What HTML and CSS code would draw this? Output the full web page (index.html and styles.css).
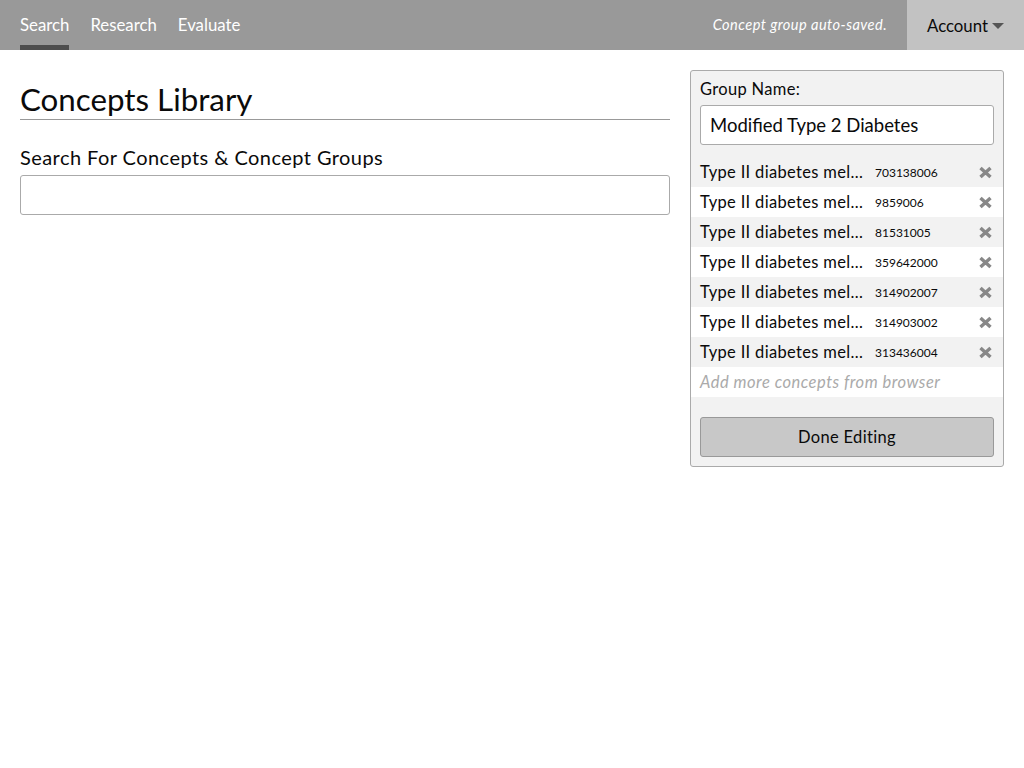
FILE: index.html
```html
<!DOCTYPE html>
<html>
<head>
<meta charset="utf-8">
<link rel="stylesheet" href="styles.css">
</head>
<body>
<header class="topbar">
  <nav class="tabs">
    <a class="tab active">Search</a>
    <a class="tab">Research</a>
    <a class="tab">Evaluate</a>
  </nav>
  <div class="status">Concept group auto-saved.</div>
  <div class="account">Account <span class="caret"></span></div>
</header>
<main class="page">
  <section class="library">
    <h1 class="title">Concepts Library</h1>
    <label class="search-label">Search For Concepts &amp; Concept Groups</label>
    <input class="search-input" type="text">
  </section>
  <aside class="group-panel">
    <div class="group-label">Group Name:</div>
    <input class="group-input" type="text" value="Modified Type 2 Diabetes">
    <ul class="concepts">
      <li class="concept"><span class="cname">Type II diabetes mel…</span><span class="code">703138006</span><svg class="remove" viewBox="0 0 15 13"><path d="M2.5 2 L12.5 11 M12.5 2 L2.5 11"/></svg></li>
      <li class="concept"><span class="cname">Type II diabetes mel…</span><span class="code">9859006</span><svg class="remove" viewBox="0 0 15 13"><path d="M2.5 2 L12.5 11 M12.5 2 L2.5 11"/></svg></li>
      <li class="concept"><span class="cname">Type II diabetes mel…</span><span class="code">81531005</span><svg class="remove" viewBox="0 0 15 13"><path d="M2.5 2 L12.5 11 M12.5 2 L2.5 11"/></svg></li>
      <li class="concept"><span class="cname">Type II diabetes mel…</span><span class="code">359642000</span><svg class="remove" viewBox="0 0 15 13"><path d="M2.5 2 L12.5 11 M12.5 2 L2.5 11"/></svg></li>
      <li class="concept"><span class="cname">Type II diabetes mel…</span><span class="code">314902007</span><svg class="remove" viewBox="0 0 15 13"><path d="M2.5 2 L12.5 11 M12.5 2 L2.5 11"/></svg></li>
      <li class="concept"><span class="cname">Type II diabetes mel…</span><span class="code">314903002</span><svg class="remove" viewBox="0 0 15 13"><path d="M2.5 2 L12.5 11 M12.5 2 L2.5 11"/></svg></li>
      <li class="concept"><span class="cname">Type II diabetes mel…</span><span class="code">313436004</span><svg class="remove" viewBox="0 0 15 13"><path d="M2.5 2 L12.5 11 M12.5 2 L2.5 11"/></svg></li>
      <li class="concept add">Add more concepts from browser</li>
    </ul>
    <div class="actions">
      <button class="done">Done Editing</button>
    </div>
  </aside>
</main>
</body>
</html>
```
FILE: styles.css
```css
* { box-sizing: border-box; }
html, body { margin: 0; padding: 0; background: #fff; }
body { font-family: "Lato", "Liberation Sans", sans-serif; color: #0a0a0a; }

.topbar {
  height: 50px;
  background: #999999;
  display: flex;
  align-items: stretch;
}
.tabs { display: flex; padding-left: 20px; gap: 21px; flex: 1; }
.tab {
  color: #fff;
  font-size: 16.8px;
  line-height: 49px;
  border-bottom: 5px solid transparent;
  height: 50px;
}
.tab.active { border-bottom-color: #4d4d4d; }
.status {
  color: #fff;
  font-style: italic;
  font-size: 14.6px;
  letter-spacing: 0.03em;
  line-height: 50px;
  padding-right: 20px;
}
.account {
  background: #c2c2c2;
  width: 117px;
  padding-left: 20px;
  font-size: 16.8px;
  line-height: 49px;
  color: #0a0a0a;
  display: flex;
  align-items: center;
}
.caret {
  display: inline-block;
  width: 0; height: 0;
  border-left: 6px solid transparent;
  border-right: 6px solid transparent;
  border-top: 6px solid #555;
  margin-left: 4px;
  margin-top: 1px;
}

.page {
  display: flex;
  padding: 20px 20px 0 20px;
  gap: 20px;
  align-items: flex-start;
}
.library { flex: 1; padding-top: 10px; }
.title {
  margin: 0;
  font-weight: 400;
  font-size: 31.3px;
  line-height: 38px;
  padding-bottom: 1px;
  border-bottom: 1px solid #999;
}
.search-label {
  display: block;
  font-size: 20px;
  letter-spacing: 0.022em;
  margin-top: 24px;
  line-height: 26px;
}
.search-input {
  display: block;
  width: 100%;
  height: 40px;
  margin-top: 5px;
  border: 1px solid #aaa;
  border-radius: 3px;
}

.group-panel {
  width: 314px;
  background: #f2f2f2;
  border: 1px solid #aaa;
  border-radius: 3px;
  padding: 8px 0 9px 0;
}
.group-label { font-size: 16.5px; letter-spacing: 0.02em; line-height: 20px; padding: 0 9px; }
.group-input {
  display: block;
  width: 294px;
  height: 40px;
  margin: 6px 9px 0 9px;
  border: 1px solid #aaa;
  border-radius: 3px;
  font-family: inherit;
  font-size: 18.5px;
  padding: 0 9px;
  color: #0a0a0a;
}
.concepts { list-style: none; margin: 12px 0 0 0; padding: 0; }
.concept {
  height: 30px;
  display: flex;
  align-items: center;
  padding: 0 9px;
  font-size: 16.5px;
  letter-spacing: 0.02em;
}
.concept:nth-child(even) { background: #fff; }
.cname {
  width: 164px;
  white-space: nowrap;
}
.code { font-size: 12px; letter-spacing: 0; margin-left: 11px; flex: 1; padding-top: 1px; }
.remove {
  width: 15px;
  height: 13px;
  margin-right: 1px;
  stroke: #888;
  stroke-width: 3.4;
  stroke-linecap: butt;
  fill: none;
}
.concept.add { color: #aaa; font-style: italic; letter-spacing: 0.03em; }
.actions { padding: 20px 9px 0 9px; }
.done {
  width: 100%;
  height: 40px;
  background: #c8c8c8;
  border: 1px solid #999;
  border-radius: 3px;
  font-family: inherit;
  font-size: 16.5px;
  letter-spacing: 0.02em;
  color: #0a0a0a;
}
```
